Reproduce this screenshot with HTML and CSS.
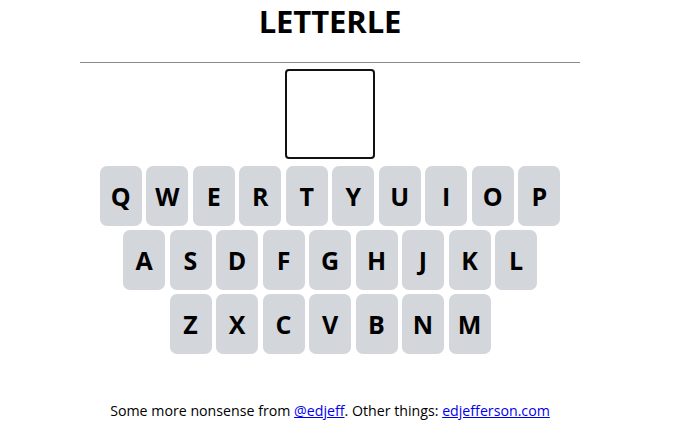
FILE: index.html
```html
<!DOCTYPE html>
<html>
<head>
<meta charset="utf-8">
<link rel="stylesheet" href="styles.css">
<title>Letterle</title>
</head>
<body>
<div class="page">
  <header class="header">
    <h1 class="title">LETTERLE</h1>
  </header>
  <div class="board">
    <div class="tile"></div>
  </div>
  <div class="keyboard">
    <div class="row">
      <button class="key">Q</button><button class="key">W</button><button class="key">E</button><button class="key">R</button><button class="key">T</button><button class="key">Y</button><button class="key">U</button><button class="key">I</button><button class="key">O</button><button class="key">P</button>
    </div>
    <div class="row">
      <button class="key">A</button><button class="key">S</button><button class="key">D</button><button class="key">F</button><button class="key">G</button><button class="key">H</button><button class="key">J</button><button class="key">K</button><button class="key">L</button>
    </div>
    <div class="row">
      <button class="key">Z</button><button class="key">X</button><button class="key">C</button><button class="key">V</button><button class="key">B</button><button class="key">N</button><button class="key">M</button>
    </div>
  </div>
  <footer class="footer">
    Some more nonsense from <a href="#">@edjeff</a>. Other things: <a href="#">edjefferson.com</a>
  </footer>
</div>
</body>
</html>
```

FILE: styles.css
```css
html, body {
  margin: 0;
  padding: 0;
  background: #ffffff;
}
body {
  font-family: "Open Sans", "Noto Sans", sans-serif;
  color: #000;
  padding: 0 18px 0 0;
}
.page {
  width: 500px;
  margin: 0 auto;
  display: flex;
  flex-direction: column;
  align-items: center;
}
.header {
  width: 500px;
  border-bottom: 1px solid #8a8a8a;
  display: flex;
  justify-content: center;
  height: 63px;
  box-sizing: border-box;
}
.title {
  margin: 0;
  padding-top: 1px;
  font-size: 31px;
  font-weight: 700;
  letter-spacing: -0.1px;
  line-height: 40px;
}
.board {
  padding-top: 6px;
}
.tile {
  width: 86px;
  height: 86px;
  border: 2px solid #111;
  border-radius: 4px;
}
.keyboard {
  margin-top: 7px;
  display: flex;
  flex-direction: column;
  align-items: center;
  gap: 4px;
}
.row {
  display: flex;
  gap: 4.5px;
}
.key {
  width: 42px;
  height: 60px;
  border: none;
  border-radius: 7px;
  background: #d3d6da;
  font-family: "Open Sans", "Noto Sans", sans-serif;
  font-weight: 700;
  font-size: 25px;
  color: #000;
  padding: 0;
  margin: 0;
}
.footer {
  margin-top: 47px;
  font-size: 14.2px;
  white-space: nowrap;
}
.footer a {
  color: #0000ee;
}
```
